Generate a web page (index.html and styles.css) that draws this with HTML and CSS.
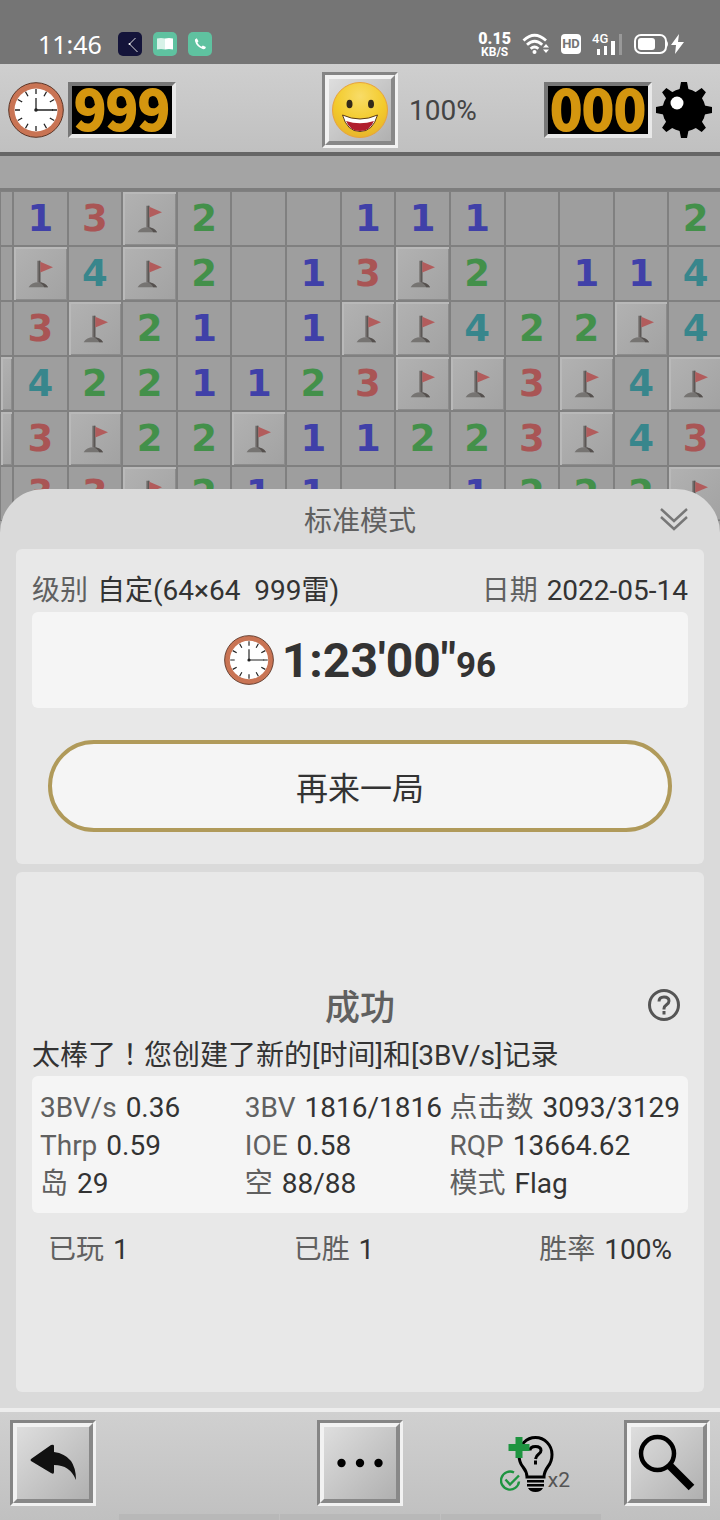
FILE: index.html
```
<!DOCTYPE html>
<html lang="zh-CN">
<head>
    <meta charset="utf-8">
    <meta name="viewport" content="width=device-width, initial-scale=1.0">
    <title>标准模式</title>
    <link rel="stylesheet" href="styles.css">
</head>
<body>
    <svg class="defs" aria-hidden="true">
        <symbol id="clock" viewBox="0 0 56 56">
            <circle cx="28" cy="28" r="27.3" fill="#c97454" stroke="#5b3526" stroke-width="1"/>
            <circle cx="28" cy="28" r="21.5" fill="#fff"/>
            <g stroke="#222" stroke-width="1.3">
                <path d="M28 7v5M28 44v5M7 28h5M44 28h5"/>
                <path d="M17.5 9.8l2.5 4.4M36 41.8l2.5 4.4M9.8 17.5l4.4 2.5M41.8 36l4.4 2.5M38.5 9.8L36 14.2M20 41.8l-2.5 4.4M46.2 17.5L41.8 20M14.2 36l-4.4 2.5"/>
                <path d="M28 16v12h17" fill="none"/>
            </g>
            <circle cx="28" cy="28" r="1.8" fill="#222"/>
        </symbol>
        <symbol id="flag" viewBox="0 0 54 54">
            <path d="M15 41q3-5 10-5t10 5z" fill="#767472"/>
            <path d="M25 36q7 0 10 5h-4q-2-4-6-5z" fill="#55504e"/>
            <path d="M24 14h3v22h-3z" fill="#6e6a68"/>
            <path d="M26 14h1v22h-1z" fill="#524e4c"/>
            <path d="M27 15l13 5.500-13 5.500z" fill="#b25c5c"/>
        </symbol>
    </svg>

    <div class="status">
        <span class="time">11:46</span>
        <svg width="24" height="24" viewBox="0 0 24 24"><rect width="24" height="24" rx="5" fill="#14143a"/><path d="M17.500 6L11.500 12l8 8" fill="none" stroke="#ddd" stroke-width="1"/><circle cx="11.500" cy="12" r="1" fill="#fff"/></svg>
        <svg width="24" height="24" viewBox="0 0 24 24"><rect width="24" height="24" rx="5" fill="#5fc2a0"/><path d="M4 6.500q4-1 8 0v11q-4-1-8 0z" fill="#d8f2e8"/><path d="M12 6.500q4-1 8 0v11q-4-1-8 0z" fill="#fff"/></svg>
        <svg width="24" height="24" viewBox="0 0 24 24"><rect width="24" height="24" rx="5" fill="#5fc2a0"/><path d="M7.200 7.200l1.600-.9 1.700 3-1.100 1.400q1.500 2.800 4 4l1.500-1.200 3 1.500-.7 1.700q-1 .7-2.600.3Q8.300 14.500 7 9q-.2-1.200.2-1.800z" fill="#fff"/></svg>
        <span class="speed"><b>0.15</b>KB/S</span>
        <svg width="28" height="24" viewBox="0 0 28 24" fill="none" stroke="#fff" stroke-width="2.800"><path d="M1.500 8.500Q12.500-2 24 8.500M5 12.800q7.700-7 15.200 0M8.600 16.800q4-3.600 7.800 0"/><circle cx="12.500" cy="20" r="2" fill="#fff" stroke="none"/><path d="M21 15.500l3-3.500 3 3.500zM21 17.500l3 3.500 3-3.500z" fill="#fff" stroke="none"/></svg>
        <span class="hd">HD</span>
        <span class="signal"><span>4G</span>
            <svg width="30" height="22" viewBox="0 0 30 22" fill="#fff"><path d="M5 16h3v6H5zM12 13h3v9h-3zM19 8h4v14h-4z"/><path d="M27 1h3v21h-3z" fill="#999"/></svg>
        </span>
        <svg class="battery" width="50" height="22" viewBox="0 0 50 22"><rect x="1" y="2" width="31" height="18" rx="6" fill="none" stroke="#fff" stroke-width="2"/><rect x="4" y="5" width="17" height="12" rx="3" fill="#fff"/><path d="M33 8q2 3 0 6z" fill="#fff"/><path d="M45 1L37 12h5l-1 9 9-12h-6z" fill="#fff"/></svg>
    </div>

    <header class="header">
        <div class="side">
            <svg class="big-icon"><use href="#clock"/></svg>
            <span class="counter">999</span>
        </div>
        <button class="bevel face" type="button" aria-label="重新开始"><span>
            <svg width="58" height="58" viewBox="0 0 58 58">
                <defs><radialGradient id="skin" cx="50%" cy="25%" r="75%"><stop offset="0" stop-color="#f8dc68"/><stop offset=".6" stop-color="#f3cb2c"/><stop offset="1" stop-color="#e8b52c"/></radialGradient></defs>
                <circle cx="29" cy="29" r="27.500" fill="url(#skin)" stroke="#e9a23c"/>
                <ellipse cx="18.500" cy="23" rx="3" ry="4.300" fill="#33291a"/>
                <ellipse cx="40" cy="23" rx="3" ry="4.300" fill="#33291a"/>
                <path d="M11.500 34q17.500 8 35 0Q42 50.500 29 50.500T11.500 34z" fill="#fff" stroke="#5a3a16" stroke-width="1"/>
                <path d="M15 40q14 4.500 28 0-4 10-14 10T15 40z" fill="#b01f2c"/>
            </svg>
        </span></button>
        <div class="side">
            <span class="percent">100%</span>
            <span class="counter left-mines">000</span>
            <svg class="big-icon" viewBox="0 0 56 56">
                <circle cx="28" cy="28" r="21.500"/>
                <g id="spikes"><path d="M25 0h6l2 10H23zM25 56h6l2-10H23zM0 25v6l10 2V23zM56 25v6l-10 2V23z"/></g>
                <use href="#spikes" transform="rotate(45 28 28)"/>
                <circle cx="21" cy="21" r="6.500" fill="#fff"/>
            </svg>
        </div>
    </header>

    <div class="field">
        <div class="board" id="board"></div>
    </div>

    <main class="sheet">
        <div class="sheet-head">
            <h1>标准模式</h1>
            <button class="plain" type="button" aria-label="收起">
                <svg width="28" height="24" viewBox="0 0 28 24" fill="none" stroke="#777" stroke-width="2.400"><path d="M1 2l13 12L27 2M1 10l13 12 13-12"/></svg>
            </button>
        </div>

        <section class="card">
            <div class="info">
                <span><i>级别</i> 自定(64×64&nbsp; 999雷)</span>
                <span><i>日期</i> 2022-05-14</span>
            </div>
            <div class="record">
                <svg class="record-icon"><use href="#clock"/></svg>
                <span>1:23'00"<small>96</small></span>
            </div>
            <button class="again" type="button">再来一局</button>
        </section>

        <section class="card result">
            <div class="result-head">
                <h2>成功</h2>
                <button class="plain" type="button" aria-label="帮助">
                    <svg width="32" height="32" viewBox="0 0 32 32" fill="none" stroke="#555" stroke-width="3"><circle cx="16" cy="16" r="14.500"/><path d="M11 12.500q0-4.500 5-4.500t5 4q0 2-2.500 3.800T16 19.500v1"/><path d="M16 22v3.500"/></svg>
                </button>
            </div>
            <p>太棒了<span class="mark" lang="zh-TW">！</span>您创建了新的[时间]和[3BV/s]记录</p>
            <div class="stats">
                <span><i>3BV/s</i> 0.36</span>
                <span><i>3BV</i> 1816/1816</span>
                <span><i>点击数</i> 3093/3129</span>
                <span><i>Thrp</i> 0.59</span>
                <span><i>IOE</i> 0.58</span>
                <span><i>RQP</i> 13664.62</span>
                <span><i>岛</i> 29</span>
                <span><i>空</i> 88/88</span>
                <span><i>模式</i> Flag</span>
            </div>
            <div class="totals">
                <span><i>已玩</i> 1</span>
                <span><i>已胜</i> 1</span>
                <span><i>胜率</i> 100%</span>
            </div>
        </section>
    </main>

    <footer class="toolbar">
        <div>
            <button class="bevel" type="button" aria-label="返回"><span>
                <svg width="72" height="72" viewBox="0 0 72 72"><path d="M14 32L34 18q3-1 3 1v6q22 3 22 28-6-15-22-15v7q0 3-3 1L14 34q-1-1 0-2z" fill="#111"/></svg>
            </span></button>
        </div>
        <button class="bevel" type="button" aria-label="更多"><span>
            <svg width="72" height="72" viewBox="0 0 72 72"><circle cx="17.500" cy="36" r="4.200"/><circle cx="36" cy="36" r="4.200"/><circle cx="54.500" cy="36" r="4.200"/></svg>
        </span></button>
        <div class="tools">
            <button class="plain hint" type="button" aria-label="提示">
                <svg width="56" height="58" viewBox="0 0 56 58">
                    <g fill="none" stroke="#000" stroke-width="3"><path d="M27 43q0-5-4-10-4-4.500-4-12.500a16.500 17 0 0 1 33 0q0 7-4 12-4 5.500-4 10.500z"/><path d="M30 16.500q0-4 5.500-4t5.500 4q0 2-2.500 3.800T35.500 25M35.500 26.500v4"/></g>
                    <path d="M27 46h17v2.500H27zM27 50h17v2.500H27zM28 54h15q-2 4-7.500 4T28 54z"/>
                    <path d="M15.500 3h7v7h7v7h-7v7h-7v-7h-7v-7h7z" fill="#1e9440"/>
                    <g fill="none" stroke="#1e9440" stroke-width="2.400"><path d="M14 38.500a9 9 0 1 0 5 9"/><path d="M5.500 45.500l4.500 5 9-9"/></g>
                </svg>
                <span>x2</span>
            </button>
            <button class="bevel" type="button" aria-label="放大"><span>
                <svg width="72" height="72" viewBox="0 0 72 72" fill="none" stroke="#000"><circle cx="26.500" cy="26.500" r="16.500" stroke-width="4.500"/><path d="M38.500 38.500L60.500 60.500" stroke-width="8"/></svg>
            </span></button>
        </div>
        <div class="nav-strip"><span></span><span></span><span></span></div>
    </footer>

    <script src="board.js"></script>
</body>
</html>
```
FILE: styles.css
```
* { box-sizing: border-box; }
body { margin: 0; min-height: 100vh; display: flex; flex-direction: column; background: #a0a0a0; color: #333; font-family: Roboto, "Noto Sans CJK SC", sans-serif; font-size: 28px; }
button { padding: 0; font: inherit; color: inherit; cursor: pointer; }
svg { display: block; }
i { margin-right: 2px; font-style: normal; color: #606060; }
h1, h2, p { margin: 0; font-weight: 400; }
.defs { position: absolute; width: 0; height: 0; }

/* status bar */
.status { display: flex; align-items: center; gap: 11px; height: 64px; padding: 24px 36px 0 38px; background: #757575; color: #fff; }
.time { margin-right: 5px; font-family: "Noto Sans", sans-serif; font-size: 25px; }
.speed { margin-left: auto; font-size: 12px; font-weight: 700; line-height: 12px; text-align: center; }
.speed b { display: block; font-size: 16px; line-height: 15px; }
.hd { width: 20px; border-radius: 4px; background: #fff; color: #757575; font-size: 13px; font-weight: 700; line-height: 20px; text-align: center; }
.signal { position: relative; }
.signal span { position: absolute; top: -1px; left: 0; font-size: 13px; font-weight: 500; line-height: 13px; }
.battery { margin-left: 1px; }

/* header */
.header { display: grid; grid-template-columns: 1fr auto 1fr; align-items: center; padding: 8px 8px 4px; border-bottom: 4px solid #666; background: linear-gradient(#cfcfcf, #c0c0c0); }
.side { display: flex; align-items: center; gap: 4px; }
.big-icon { width: 56px; height: 56px; }
.counter { width: 108px; height: 56px; border: 4px solid; border-color: #777 #e8e8e8 #e8e8e8 #777; background: #000; color: #d4960f; font-family: "Noto Sans CJK SC", sans-serif; font-size: 54px; font-weight: 700; line-height: 42px; text-align: center; -webkit-text-stroke: 2px #d4960f; }
.percent { margin-left: 11px; color: #444; }
.left-mines { margin-left: auto; }

.bevel { width: 86px; height: 86px; border: 3px solid; border-color: #858585 #f2f2f2 #f2f2f2 #858585; background: none; }
.bevel > span { display: grid; place-items: center; height: 100%; border: 4px solid; border-color: #f2f2f2 #888 #888 #f2f2f2; background: linear-gradient(135deg, #dedede, #b0b0b0); }
.face { width: 76px; height: 76px; }
.plain { border: 0; background: none; }

/* mine field */
.field { padding-top: 32px; background: #a4a4a4; overflow: hidden; }
.board { display: grid; grid-template-columns: 13px repeat(13, minmax(0, 1fr)); grid-auto-rows: 55px; margin-right: -3px; border-top: 3px solid #7d7d7d; background: #9e9e9e; }
.cell { border: 1px solid #808080; font-family: "DejaVu Sans", sans-serif; font-size: 37px; font-weight: 700; line-height: 54px; text-align: center; overflow: hidden; }
.closed { background: linear-gradient(135deg, #b2b2b2, #a2a2a2); box-shadow: inset 2px 2px #b9b9b9, inset -1px -1px #8c8c8c; }
.closed svg { width: 100%; height: 100%; }
.n1 { color: #4040a8; }
.n2 { color: #43904a; }
.n3 { color: #a95555; }
.n4 { color: #38868c; }

/* result sheet */
.sheet { position: relative; flex: 1; display: flex; flex-direction: column; gap: 8px; margin-top: -32px; padding: 0 16px 16px; border-radius: 44px 44px 0 0; background: #dadada; }
.sheet-head { display: grid; grid-template-columns: 1fr auto 1fr; align-items: center; height: 52px; padding: 8px 16px 0; color: #606060; }
.sheet-head h1 { grid-column: 2; font-size: 28px; }
.sheet-head button, .result-head button { justify-self: end; }
.card { padding: 21px 16px 32px; border-radius: 6px; background: #e8e8e8; }
.info, .totals { display: flex; justify-content: space-between; line-height: 42px; }
.record { display: flex; align-items: center; justify-content: center; gap: 8px; height: 96px; margin-bottom: 32px; border-radius: 6px; background: #f5f5f5; font-size: 48px; font-weight: 700; }
.record small { font-size: 35px; }
.record-icon { width: 50px; height: 50px; }
.again { display: block; width: calc(100% - 32px); height: 92px; margin: 0 16px; border: 4px solid #b09a5a; border-radius: 46px; background: #f5f5f5; font-size: 32px; }

.result { flex: 1; display: flex; flex-direction: column; justify-content: center; padding: 0 16px 13px; }
.result-head { display: grid; grid-template-columns: 1fr auto 1fr; align-items: center; padding-top: 4px; color: #606060; line-height: 48px; }
.result-head h2 { grid-column: 2; font-size: 35px; font-weight: 500; }
.result-head button { padding: 0 8px 8px 0; }
.result p { line-height: 40px; }
.mark { font-family: "Noto Sans CJK TC", sans-serif; }
.stats { display: grid; grid-template-columns: 16fr 16fr 18fr; padding: 13px 8px 10px; border-radius: 6px; background: #f5f5f5; line-height: 38px; white-space: nowrap; }
.stats span { min-width: 0; }
.totals { margin-top: 16px; padding: 0 16px; }

/* toolbar */
.toolbar { display: grid; grid-template-columns: 1fr auto 1fr; padding: 8px 10px 0; border-top: 4px solid #ededed; background: linear-gradient(#d0d0d0, #c0c0c0); }
.tools { display: flex; align-items: center; justify-content: flex-end; gap: 54px; }
.hint { display: flex; align-items: flex-end; color: #555; font-size: 21px; line-height: 24px; }
.hint span { margin-left: -8px; }
.nav-strip { grid-column: 1 / -1; display: grid; grid-template-columns: repeat(3, 1fr); gap: 1px; height: 6px; margin: 8px 109px 0; }
.nav-strip span { background: #b8b8b8; }
```
FILE: board.js
```
// F = flag, # = closed, . = open and empty
const rows = [
    '.13F2..111...2',
    '.F4F2.13F2.114',
    '.3F21.1FF422F4',
    '#4221123FF3F4F',
    '#3F22F11223F43',
    '.33F211..1222F'
];

const board = document.getElementById('board');

for (const row of rows) {
    for (const value of row) {
        const cell = document.createElement('div');
        cell.className = 'cell';
        if (value === 'F' || value === '#') {
            cell.classList.add('closed');
            if (value === 'F') {
                cell.innerHTML = '<svg><use href="#flag"/></svg>';
            }
        } else if (value !== '.') {
            cell.classList.add('n' + value);
            cell.textContent = value;
        }
        board.appendChild(cell);
    }
}
```
